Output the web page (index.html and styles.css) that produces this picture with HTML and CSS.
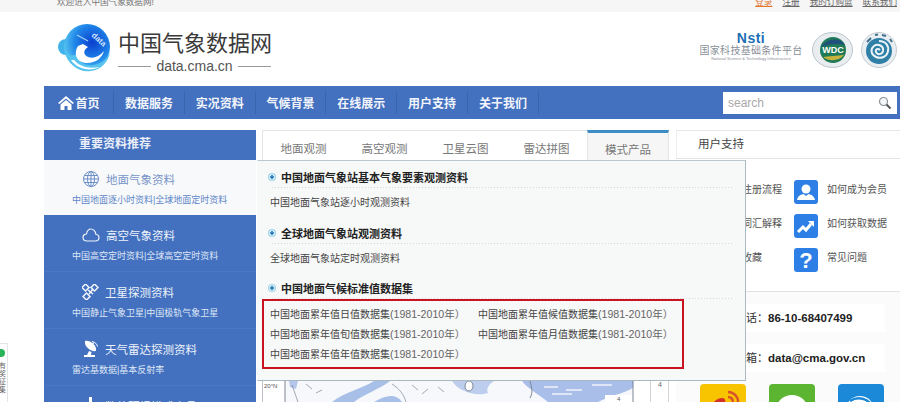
FILE: index.html
```html
<!DOCTYPE html>
<html lang="zh">
<head>
<meta charset="utf-8">
<title>中国气象数据网</title>
<link rel="stylesheet" href="styles.css">
</head>
<body>
<div class="topbar">
  <span>欢迎进入中国气象数据网!</span>
  <div class="toplinks"><a class="login">登录</a><a>注册</a><a>我的订购篮</a><a>联系我们</a></div>
</div>

<header class="head">
  <svg class="logo" width="54" height="52" viewBox="0 0 54 52">
    <defs>
      <radialGradient id="lg" cx="62%" cy="40%" r="65%"><stop offset="0" stop-color="#0b3fd0"/><stop offset=".6" stop-color="#1f86e8"/><stop offset="1" stop-color="#5cc8f0"/></radialGradient>
    </defs>
    <circle cx="9" cy="23" r="8" fill="#3fb2ea"/>
    <circle cx="30" cy="23" r="23" fill="url(#lg)"/>
    <path d="M8 27 C10 40 22 49 34 47 C44 46 52 37 53 28 C49 38 40 42 31 41 C24 40 20 35 22 29 C16 33 11 32 8 27Z" fill="#57c3ef"/>
    <path d="M21 22 C16 30 20 39 30 39 C39 39 45 34 47 27 C42 33 36 35 31 33 C26 31 26 26 31 23 L26 20 Z" fill="#fff"/>
    <path d="M14 36 C20 45 33 48 43 43 C32 45 23 43 17 36Z" fill="#fff"/>
    <path d="M20 11 L31 17" stroke="#9fd4f5" stroke-width="1.2"/>
    <text class="logo-data" x="34" y="12" transform="rotate(42 34 12)">data</text>
  </svg>
  <div class="brand">
    <div class="brand-cn">中国气象数据网</div>
    <div class="brand-en"><i></i><span>data.cma.cn</span><i></i></div>
  </div>
  <div class="partners">
    <div class="nsti">
      <div class="nsti-mark">Nsti</div>
      <div class="nsti-cn">国家科技基础条件平台</div>
      <div class="nsti-en">National Science &amp; Technology Infrastructure</div>
    </div>
    <svg width="41" height="36" viewBox="0 0 41 36">
      <ellipse cx="20.5" cy="18" rx="20" ry="17.500" fill="#e9edf0" stroke="#b9c4cc"/>
      <circle cx="21" cy="18" r="13" fill="#1f7a58"/>
      <path d="M9 15 C15 6 28 5 33 13 C26 11 17 12 9 15Z" fill="#21507c"/>
      <path d="M11 25 C18 30 27 29 32 23 C25 24 17 24 11 25Z" fill="#c9b23c"/>
      <text class="wdc" x="21" y="21">WDC</text>
    </svg>
    <svg width="36" height="36" viewBox="0 0 36 36">
      <ellipse cx="18" cy="18" rx="17.500" ry="17.500" fill="#e8eef1" stroke="#c3ccd2"/>
      <circle cx="18" cy="19" r="13" fill="#2f7fa6"/>
      <path d="M18 9 C25 9 28 14 27 19 C26 25 20 27 15 25 C10 23 9 17 13 14 C17 11 23 14 22 19 C21 23 16 23 15 20 C14 17 17 16 19 18" fill="none" stroke="#eaf4f8" stroke-width="2"/>
      <path d="M6 10 L10 6 M14 3 L17 2.500 M21 3 L25 4 M29 7 L31 10" stroke="#41708c" stroke-width="2"/>
    </svg>
  </div>
</header>

<nav class="nav">
  <a class="nav-home">
    <svg width="16" height="14" viewBox="0 0 16 14"><path d="M8 0 L16 7 L14.500 8 L8 2.500 L1.500 8 L0 7Z M2.500 8.500 L8 4 L13.500 8.500 V14 H9.500 V10 H6.500 V14 H2.500Z" fill="#fff"/></svg>首页
  </a>
  <a>数据服务</a><a>实况资料</a><a>气候背景</a><a>在线展示</a><a>用户支持</a><a>关于我们</a>
  <div class="search">
    <span>search</span>
    <svg width="14" height="14" viewBox="0 0 14 14"><circle cx="5.500" cy="5.500" r="4" fill="#f4f7f8" stroke="#8a9299" stroke-width="1.200"/><path d="M8.500 8.500 L12.500 12.500" stroke="#555" stroke-width="2"/></svg>
  </div>
</nav>

<main class="main">
  <aside class="side">
    <h2 class="side-head">重要资料推荐</h2>
    <section class="side-item active">
      <div class="side-title">
        <svg width="18" height="18" viewBox="0 0 18 18" fill="none" stroke="#6c8fc8"><circle cx="9" cy="9" r="7.500"/><ellipse cx="9" cy="9" rx="3.500" ry="7.500"/><path d="M9 1.500 V16.500 M1.500 9 H16.500 M2.500 5.500 H15.500 M2.500 12.500 H15.500"/></svg>
        <span>地面气象资料</span>
      </div>
      <p>中国地面逐小时资料|全球地面定时资料</p>
    </section>
    <section class="side-item">
      <div class="side-title">
        <svg width="18" height="14" viewBox="0 0 18 14" fill="none" stroke="#eef3fb" stroke-width="1.200"><path d="M5 13 H13 C16 13 17 11 17 9.500 C17 7.500 15.500 6.500 14 6.500 C13.500 3 11 1 9 1 C6.500 1 5 3 4.500 6 C2.500 6 1 7.500 1 9.500 C1 11.500 2.500 13 5 13Z"/></svg>
        <span>高空气象资料</span>
      </div>
      <p>中国高空定时资料|全球高空定时资料</p>
    </section>
    <section class="side-item">
      <div class="side-title">
        <svg width="17" height="16" viewBox="0 0 17 16" fill="none" stroke="#f2f5fb" stroke-width="1.500"><rect x="1" y="1" width="5" height="5" transform="rotate(45 3.500 3.500)"/><rect x="10" y="1" width="5" height="5" transform="rotate(45 12.500 3.500)"/><rect x="2" y="10" width="5" height="5" transform="rotate(45 4.500 12.500)"/><path d="M6 6 L11 10 M11 5 L7 10"/></svg>
        <span>卫星探测资料</span>
      </div>
      <p>中国静止气象卫星|中国极轨气象卫星</p>
    </section>
    <section class="side-item">
      <div class="side-title">
        <svg width="17" height="18" viewBox="0 0 17 18"><path d="M3 1 C8 0 15 5 14 11 C9 12 2 7 3 1Z" fill="#fff"/><path d="M7 6 L12 3 M10 1.500 C13 2 15 4 15.500 6.500" stroke="#fff" fill="none"/><path d="M7 11 L5 15 H2 V17 H13 V15 H9 L9.500 12Z" fill="#fff"/></svg>
        <span>天气雷达探测资料</span>
      </div>
      <p>雷达基数据|基本反射率</p>
    </section>
    <section class="side-item">
      <div class="side-title">
        <svg width="17" height="18" viewBox="0 0 17 18"><rect x="7" y="0" width="3" height="14" fill="#fff"/></svg>
        <span>数值预报模式产品</span>
      </div>
    </section>
  </aside>

  <section class="center">
    <div class="tabs">
      <a>地面观测</a><a>高空观测</a><a>卫星云图</a><a>雷达拼图</a><a class="on">模式产品</a>
    </div>
    <div class="map">
      <div class="map-view">
        <svg width="380" height="21" viewBox="0 0 380 21">
          <rect x="23" width="348" height="21" fill="#f7f8fb"/>
          <path d="M27 0 H36 L34 8 L28 6Z" fill="#b4c6ea"/>
          <path d="M70 21 C84 10 100 8 112 0 H128 C118 8 100 14 92 21Z" fill="#a8bfe8"/>
          <path d="M112 21 C124 14 134 12 140 21Z" fill="#a8bfe8"/>
          <path d="M190 0 H232 C226 4 224 8 226 12 C214 16 196 10 190 0Z" fill="#bccdee"/>
          <path d="M260 0 H371 V6 C370 10 350 14 336 21 H286 C278 14 266 8 260 0Z" fill="#a9bfe9"/>
          <ellipse cx="207" cy="5" rx="4" ry="5" fill="#fff" stroke="#7d8794"/>
          <path d="M268 0 C270 7 271 12 268 17" stroke="#7d8794" fill="none"/>
          <path d="M30 4 L36 21 M44 3 L50 8 M54 12 L60 9 M150 4 L156 9 M160 13 L166 8 M176 6 L182 11 M130 3 C138 8 142 14 144 21" stroke="#7d8794" stroke-width=".7" fill="none"/>
          <path d="M282 6 H296 M304 9 H320 M290 13 H310 M330 4 H350" stroke="#eef2fa" stroke-width="1.500"/>
          <rect x="343" y="14" width="28" height="7" fill="#fff"/>
          <path d="M0 0 V21 M23 0 V21 M371 0 V21" stroke="#5a6478" stroke-width=".8"/>
          <text class="map-label" x="2" y="7">20°N</text>
          <text class="map-label" x="355" y="20">4</text>
        </svg>
      </div>
      <div class="scale"><span>4</span></div>
    </div>
  </section>

  <aside class="support">
    <h2 class="support-head">用户支持</h2>
    <div class="help">
      <div class="help-row">
        <span class="help-l">注册流程</span>
        <a class="help-r">
          <svg class="hi" viewBox="0 0 24 24"><rect width="24" height="24" rx="3" fill="#2d7fe6"/><circle cx="12" cy="9" r="4.500" fill="#fff"/><path d="M3 20 C4 15 8 14.500 9.500 14 L12 16 L14.500 14 C16 14.500 20 15 21 20Z" fill="#fff"/></svg>
          <span>如何成为会员</span>
        </a>
      </div>
      <div class="help-row">
        <span class="help-l">词汇解释</span>
        <a class="help-r">
          <svg class="hi" viewBox="0 0 24 24"><rect width="24" height="24" rx="3" fill="#2d7fe6"/><path d="M4 18 L9 13 L12 16 L17 10" stroke="#fff" stroke-width="3" fill="none"/><path d="M14 7 H20 V13Z" fill="#fff"/></svg>
          <span>如何获取数据</span>
        </a>
      </div>
      <div class="help-row">
        <span class="help-l">收藏</span>
        <a class="help-r">
          <svg class="hi" viewBox="0 0 24 24"><rect width="24" height="24" rx="3" fill="#2d7fe6"/><text class="q" x="12" y="20">?</text></svg>
          <span>常见问题</span>
        </a>
      </div>
    </div>
    <div class="contact">
      <div class="contact-box">联系电话：<b>86-10-68407499</b></div>
      <div class="contact-box">联系邮箱：<b>data@cma.gov.cn</b></div>
    </div>
    <div class="social">
      <svg class="soc" viewBox="0 0 46 46"><rect width="46" height="46" rx="4" fill="#f8c400"/><path d="M10 26 C10 20 17 14 22 14 C25 14 26 17 25 19 C29 18 32 20 30 24 C33 25 33 31 28 34 C21 38 10 35 10 26Z" fill="#d3322a"/><path d="M28 8 C34 8 39 13 38 20 M28 13 C31 13 33 15 33 19" stroke="#d9532a" stroke-width="2.500" fill="none"/></svg>
      <svg class="soc" viewBox="0 0 46 46"><rect width="46" height="46" rx="4" fill="#5cb531"/><ellipse cx="23" cy="24" rx="15" ry="13" fill="#fff"/><circle cx="18" cy="20" r="2" fill="#5cb531"/><circle cx="28" cy="20" r="2" fill="#5cb531"/></svg>
      <svg class="soc" viewBox="0 0 46 46"><rect width="46" height="46" rx="4" fill="#1b88d8"/><circle cx="22" cy="26" r="14" fill="#fff"/><path d="M12 17 C20 12 30 14 35 23 M14 22 C20 18 27 19 31 25" stroke="#1b88d8" stroke-width="2.500" fill="none"/></svg>
    </div>
  </aside>

  <div class="panel">
    <h3 class="panel-title">中国地面气象站基本气象要素观测资料</h3>
    <div class="panel-rows"><a>中国地面气象站逐小时观测资料</a></div>
    <h3 class="panel-title">全球地面气象站观测资料</h3>
    <div class="panel-rows"><a>全球地面气象站定时观测资料</a></div>
    <h3 class="panel-title">中国地面气候标准值数据集</h3>
    <div class="panel-rows marked">
      <a>中国地面累年值日值数据集<em>(1981-2010年）</em></a>
      <a>中国地面累年值候值数据集<em>(1981-2010年）</em></a>
      <a>中国地面累年值旬值数据集<em>(1981-2010年）</em></a>
      <a>中国地面累年值月值数据集<em>(1981-2010年）</em></a>
      <a>中国地面累年值年值数据集<em>(1981-2010年）</em></a>
    </div>
  </div>
</main>

<div class="float-tab">
  <i></i>
  <span>有奖征集</span>
</div>
</body>
</html>
```

FILE: styles.css
```css
* { box-sizing: border-box; }
html, body { margin: 0; padding: 0; }
body {
  width: 900px;
  height: 402px;
  overflow: hidden;
  position: relative;
  background: #fff;
  color: #444;
  font-family: "Liberation Sans", "Noto Sans CJK SC", sans-serif;
  font-size: 10px;
}
h2, h3, p { margin: 0; font-weight: normal; }
a { color: inherit; text-decoration: none; }

.topbar {
  height: 12px;
  padding: 0 3px 0 57px;
  display: flex;
  justify-content: space-between;
  background: #f6f6f6;
  color: #777;
  font-size: 8.600px;
  line-height: 5px;
  overflow: hidden;
}
.toplinks { display: flex; gap: 10px; }
.toplinks a { text-decoration: underline; color: #666; }
.toplinks .login { color: #e2762f; }

.head {
  height: 74px;
  display: flex;
  align-items: flex-start;
  padding: 12px 3px 0 57px;
}
.logo-data { font: bold 8px "Liberation Sans", sans-serif; fill: #cfe6fa; }
.brand { margin: 7px 0 0 7px; width: 153px; }
.brand-cn {
  font-size: 22px;
  line-height: 26px;
  color: #3a3a3a;
  white-space: nowrap;
}
.brand-en {
  display: flex;
  align-items: center;
  gap: 5px;
  font-size: 14px;
  line-height: 16px;
  color: #555;
  margin-top: 1px;
}
.brand-en i { flex: 1; height: 1px; background: #999; }
.partners {
  margin-left: auto;
  display: flex;
  align-items: flex-start;
  gap: 8px;
  margin-top: 8px;
}
.nsti { width: 104px; text-align: center; color: #8a8f98; margin-top: 0; margin-right: 1px; }
.nsti-mark {
  font: bold 14px/13px "Liberation Sans", sans-serif;
  color: #1d6fb5;
  letter-spacing: .5px;
}
.nsti-cn { font-size: 10px; line-height: 12px; white-space: nowrap; letter-spacing: .3px; }
.nsti-en { font-size: 4px; line-height: 4px; white-space: nowrap; }
.wdc { font: bold 9px "Liberation Sans", sans-serif; fill: #fff; text-anchor: middle; }

.nav {
  height: 33px;
  margin-left: 44px;
  background: #4370bf;
  display: flex;
  align-items: center;
  color: #f2f5fb;
  font-family: "Noto Sans CJK SC", sans-serif;
  font-size: 12px;
  font-weight: 700;
}
.nav a {
  height: 23px;
  width: 70.800px;
  display: flex;
  align-items: center;
  justify-content: center;
  border-right: 1px solid #3a64ad;
}
.nav .nav-home {
  width: 70px;
  padding-left: 1px;
  gap: 1px;
}
.search {
  margin-left: auto;
  margin-right: 3px;
  width: 174px;
  height: 22px;
  background: #fff;
  padding: 0 5px;
  display: flex;
  align-items: center;
  justify-content: space-between;
  color: #a8a8a8;
  font: 12px "Liberation Sans", sans-serif;
}

.main {
  position: relative;
  margin: 11px 0 0 44px;
  height: 272px;
  overflow: hidden;
  display: flex;
  align-items: flex-start;
}

.side { width: 212px; background: #4370bf; color: #eef3fb; flex: none; }
.side-head {
  height: 30px;
  line-height: 28px;
  padding-left: 35px;
  font-size: 12px;
  font-weight: 700;
  color: #e9eef8;
}
.side-item {
  height: 57px;
  padding-top: 10px;
  border-bottom: 1px solid #4b78c6;
}
.side-item p {
  font-size: 9px;
  line-height: 13px;
  margin: 5px 0 0 28px;
  color: #dfe7f6;
  white-space: nowrap;
}
.side-title {
  display: flex;
  align-items: center;
  gap: 6px;
  height: 20px;
  padding-left: 38px;
  font-size: 11.500px;
  color: #eef3fb;
}
.side-item.active { height: 55px; background: #f8f9fa; border-bottom: 0; padding-top: 9px; }
.side-item.active .side-title { color: #7795c9; }
.side-item.active p { color: #5e86c9; }

.center { width: 407px; margin-left: 6px; flex: none; }
.tabs {
  height: 30px;
  display: flex;
  border-top: 1px solid #e2e5e8;
  border-left: 1px solid #e2e5e8;
  font-size: 11.500px;
  color: #777;
}
.tabs a {
  width: 81px;
  display: flex;
  align-items: center;
  justify-content: center;
  padding-top: 4px;
}
.tabs .on {
  margin-top: -1px;
  background: #f6f6f6;
  border-top: 3px solid #3d8cc4;
  border-left: 1px solid #e4e4e4;
  border-right: 1px solid #e4e4e4;
  flex: 1;
}
.map {
  height: 242px;
  display: flex;
  align-items: flex-end;
}
.map-view { width: 380px; height: 21px; }
.map-view svg { display: block; }
.map-label { font: 6px "Liberation Sans", sans-serif; fill: #555; }
.scale {
  width: 27px;
  height: 21px;
  border-right: 1px solid #d4d7db;
  text-align: right;
  padding-right: 6px;
  color: #666;
  font-size: 7px;
  line-height: 8px;
  background-image: linear-gradient(#cfd3d8, #cfd3d8);
  background-size: 1px 100%;
  background-repeat: no-repeat;
  background-position: 8px 0;
}

.support { width: 224px; margin-left: 7px; flex: none; color: #555; background: #fbfbfb; }
.support-head {
  height: 29px;
  padding-left: 21px;
  line-height: 27px;
  font-size: 11.500px;
  color: #444;
  background: #fff;
  border-top: 1px solid #e6e6e6;
  border-left: 1px solid #eee;
  border-bottom: 1px solid #e4e4e4;
}
.help {
  height: 133px;
  padding: 21px 0 0 66px;
  background: #fff;
  border-bottom: 1px solid #e2e2e2;
  display: flex;
  flex-direction: column;
  gap: 10px;
}
.help-row { display: flex; align-items: flex-start; height: 24px; line-height: 20px; }
.help-l { width: 52px; font-size: 10px; white-space: nowrap; }
.help-r { display: flex; align-items: flex-start; gap: 9px; font-size: 10px; }
.hi { width: 24px; height: 24px; }
.q { font: bold 22px "Liberation Sans", sans-serif; fill: #fff; text-anchor: middle; }
.contact {
  display: flex;
  flex-direction: column;
  gap: 12px;
  padding: 12px 15px 0 37px;
}
.contact-box {
  height: 28px;
  line-height: 28px;
  background: #fff;
  font-size: 11px;
  white-space: nowrap;
  color: #333;
}
.contact-box b { color: #222; font-weight: 700; font-size: 11.500px; }
.social {
  display: flex;
  gap: 23px;
  padding: 12px 0 0 24px;
}
.soc { width: 46px; height: 46px; flex: none; }

.panel {
  position: absolute;
  left: 213px;
  top: 30px;
  width: 489px;
  height: 221px;
  padding: 5px 0 0 12px;
  background: #f7f8f8;
  border: 1px solid #aab8bf;
  border-left-color: #f7f8f8;
  border-top-color: #b9c8ce;
}
.panel-title {
  position: relative;
  height: 22px;
  width: 463px;
  padding-left: 11px;
  line-height: 24px;
  font-size: 11px;
  font-weight: 700;
  color: #222;
  background-image: linear-gradient(to right, #d8d8d8 50%, transparent 50%);
  background-size: 3px 1px;
  background-repeat: repeat-x;
  background-position: bottom;
}
.panel-title::before {
  content: "";
  position: absolute;
  left: -2px;
  top: 7px;
  width: 8px;
  height: 8px;
  border-radius: 50%;
  background: radial-gradient(circle, #2f80b8 0 1.500px, #e8f6fa 2px, #9fd8ea 3.500px);
}
.panel-rows {
  display: grid;
  grid-template-columns: 208px 208px;
  grid-auto-rows: 20px;
  height: 33.500px;
  padding-top: 5px;
  font-size: 10px;
  line-height: 20px;
  white-space: nowrap;
  color: #444;
}
.panel-rows em { font-style: normal; font-size: 10.600px; color: #666; }
.panel-rows.marked {
  margin: 0 0 0 -8px;
  padding: 3px 0 0 6px;
  width: 422px;
  height: 70px;
  border: 2px solid #c8141e;
}

.float-tab {
  position: absolute;
  left: 0;
  top: 343px;
  width: 8px;
  height: 59px;
  background: #fff;
  border-top: 1px solid #e4e4e4;
  border-right: 1px solid #e4e4e4;
  overflow: hidden;
  color: #666;
  font-size: 7px;
  line-height: 8px;
}
.float-tab i {
  display: block;
  margin: 5px 0 5px -3px;
  width: 8px;
  height: 8px;
  border-radius: 50%;
  background: #29b45a;
}
.float-tab span { display: block; margin-left: -1px; width: 7px; }
```
